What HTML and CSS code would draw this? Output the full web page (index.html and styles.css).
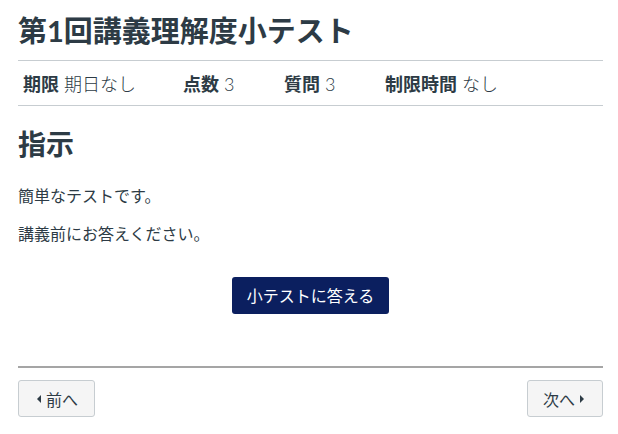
FILE: index.html
```html
<!DOCTYPE html>
<html lang="ja">
<head>
    <meta charset="UTF-8">
    <meta name="viewport" content="width=device-width, initial-scale=1.0">
    <title>第1回講義理解度小テスト</title>
    <link rel="stylesheet" href="styles.css">
</head>
<body>
    <div class="page">
        <h1 class="quiz-title">第1回講義理解度小テスト</h1>

        <ul class="quiz-details">
            <li><span class="label">期限</span> 期日なし</li>
            <li><span class="label">点数</span> 3</li>
            <li><span class="label">質問</span> 3</li>
            <li><span class="label">制限時間</span> なし</li>
        </ul>

        <h2 class="section-title">指示</h2>
        <p>簡単なテストです。</p>
        <p>講義前にお答えください。</p>

        <div class="take-quiz">
            <a href="#" class="btn-primary">小テストに答える</a>
        </div>

        <div class="module-nav">
            <a href="#" class="btn-nav"><span class="arrow-left"></span>前へ</a>
            <a href="#" class="btn-nav">次へ<span class="arrow-right"></span></a>
        </div>
    </div>
</body>
</html>
```

FILE: styles.css
```css
body {
    margin: 0;
    font-family: Lato, "Noto Sans CJK JP", sans-serif;
    color: #2d3b45;
    background: #fff;
}

.page {
    margin: 0 15px 0 18px;
}

.quiz-title {
    font-size: 29px;
    font-weight: bold;
    margin: 0;
    padding: 12px 0 11px;
    line-height: 37px;
}

.quiz-details {
    list-style: none;
    margin: 0;
    padding: 0 5px;
    display: grid;
    grid-template-columns: 160px 101px 101px auto;
    border-top: 1px solid #c7cdd1;
    border-bottom: 1px solid #c7cdd1;
    height: 44px;
    align-items: center;
    font-size: 18px;
    font-weight: 300;
}

.label {
    font-weight: bold;
}

.section-title {
    font-size: 28px;
    font-weight: bold;
    margin: 0;
    padding: 20px 0 0;
    line-height: 36px;
}

p {
    font-size: 16px;
    margin: 0;
    margin-top: 18px;
    line-height: 20px;
}

.section-title + p {
    margin-top: 24px;
}

.take-quiz {
    display: flex;
    justify-content: center;
    margin-top: 33px;
}

.btn-primary {
    display: inline-block;
    background-color: #0b1f5f;
    color: #fff;
    text-decoration: none;
    font-size: 16px;
    line-height: 37px;
    height: 37px;
    padding: 0 15px;
    border-radius: 3px;
}

.module-nav {
    display: flex;
    justify-content: space-between;
    margin-top: 52px;
    border-top: 2px solid #a5a5a5;
    padding-top: 12px;
}

.btn-nav {
    display: inline-flex;
    align-items: center;
    gap: 5px;
    height: 35px;
    padding: 0 16px 0 18px;
    background: #f5f5f5;
    border: 1px solid #c7cdd1;
    border-radius: 3px;
    color: #2d3b45;
    text-decoration: none;
    font-size: 16px;
}

.btn-nav:last-child {
    padding: 0 18px 0 15px;
}

.arrow-left {
    border-top: 4px solid transparent;
    border-bottom: 4px solid transparent;
    border-right: 4px solid #2d3b45;
}

.arrow-right {
    border-top: 4px solid transparent;
    border-bottom: 4px solid transparent;
    border-left: 4px solid #2d3b45;
}
```
